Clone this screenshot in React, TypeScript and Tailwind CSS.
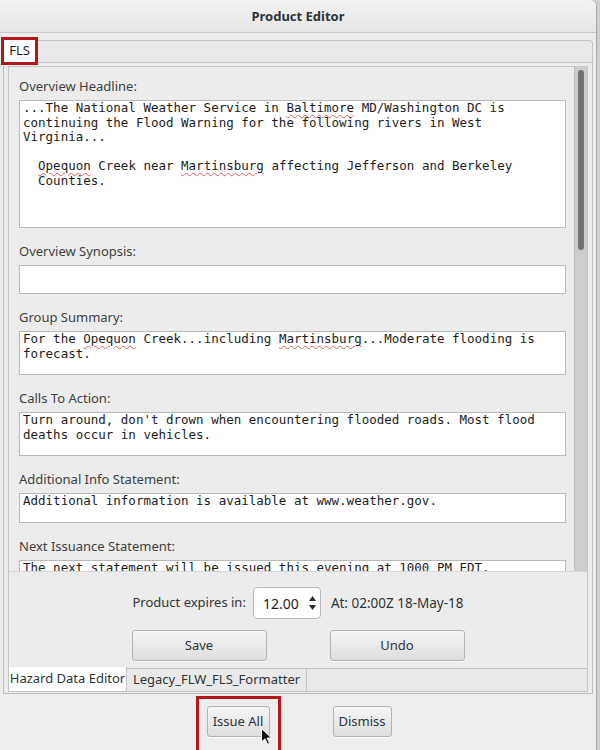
import React from "react";

const sans = { fontFamily: '"Noto Sans", "Open Sans", sans-serif' };
const mono = { fontFamily: '"DejaVu Sans Mono", "Liberation Mono", monospace' };

function Spell({ children }: { children: React.ReactNode }) {
  return (
    <span className="underline decoration-wavy decoration-[#e06060] decoration-1 underline-offset-[2px]">{children}</span>
  );
}

function Field({ label, h, first, children }: { label: string; h: string; first?: boolean; children?: React.ReactNode }) {
  return (
    <div className={first ? "" : "mt-[15px]"}>
      <div className="h-[16px] text-[13px] leading-[16px] text-[#3c3f40]">{label}</div>
      <div
        style={mono}
        className={`mt-[6px] ${h} overflow-hidden whitespace-pre-wrap border border-[#b9b9b9] bg-white px-[3px] text-[12.5px] leading-[14.5px] text-[#1c1c1c]`}
      >
        {children}
      </div>
    </div>
  );
}

function Btn({ children, w }: { children: React.ReactNode; w: string }) {
  return (
    <div
      className={`flex h-[31px] ${w} shrink-0 items-center justify-center rounded-[3px] border border-[#b3b3b3] bg-gradient-to-b from-[#f6f6f6] to-[#dedede] text-[13px] text-[#2e3436] shadow-[0_1px_0_rgba(255,255,255,0.8)]`}
    >
      {children}
    </div>
  );
}

export default function App() {
  return (
    <div style={sans} className="h-[750px] w-[600px] overflow-hidden bg-[#cfcfcf]">
      <div className="flex h-[750px] w-[597px] flex-col rounded-tr-[6px] border-r border-[#a8a8a8] bg-[#ededed]">
        {/* title bar */}
        <div className="flex h-[33px] shrink-0 items-center justify-center rounded-tr-[6px] border-b border-[#c9c9c9] bg-gradient-to-b from-[#f2f2f2] to-[#e6e6e6] pt-[1px] text-[13px] font-bold text-[#2e3436]">
          Product Editor
        </div>

        {/* outer tab strip */}
        <div className="mt-[4px] flex h-[26px] shrink-0 pl-[1px] pr-[3px]">
          <div className="relative z-10 flex h-[28px] w-[37px] items-center justify-center border-[3px] border-[#b3161c] bg-white text-[13px] text-[#1e1e1e]">
            FLS
          </div>
          <div className="mt-[3px] h-[23px] flex-1 rounded-tr-[4px] border-t border-r border-b border-[#c3c3c3] bg-[#e9e9e9]" />
        </div>

        {/* outer page */}
        <div className="ml-[3px] w-[590px] shrink-0 border-x border-b border-[#bcbcbc] bg-[#ededed] px-[4px] pt-[3px] pb-[1px]">
          <div className="border-x border-t border-[#c6c6c6] bg-[#ececec]">
            {/* scroll area */}
            <div className="flex h-[504px]">
              <div className="flex-1 overflow-hidden pl-[10px] pr-[8px] pt-[11px]">
                <Field label="Overview Headline:" h="h-[128px]" first>
                  {"...The National Weather Service in "}
                  <Spell>Baltimore</Spell>
                  {" MD/Washington DC is\ncontinuing the Flood Warning for the following rivers in West\nVirginia...\n\n  "}
                  <Spell>Opequon</Spell>
                  {" Creek near "}
                  <Spell>Martinsburg</Spell>
                  {" affecting Jefferson and Berkeley\n  Counties."}
                </Field>
                <Field label="Overview Synopsis:" h="h-[29px]" />
                <Field label="Group Summary:" h="h-[44px]">
                  {"For the "}
                  <Spell>Opequon</Spell>
                  {" Creek...including "}
                  <Spell>Martinsburg</Spell>
                  {"...Moderate flooding is\nforecast."}
                </Field>
                <Field label="Calls To Action:" h="h-[44px]">
                  {"Turn around, don't drown when encountering flooded roads. Most flood\ndeaths occur in vehicles."}
                </Field>
                <Field label="Additional Info Statement:" h="h-[30px]">
                  {"Additional information is available at www.weather.gov."}
                </Field>
                <Field label="Next Issuance Statement:" h="h-[40px]">
                  {"The next statement will be issued this evening at 1000 PM EDT."}
                </Field>
              </div>
              {/* scrollbar */}
              <div className="w-[13px] border-l border-[#bdbdbd] bg-[#cdcdcd] px-[3px] pt-[3px]">
                <div className="h-[180px] rounded-full bg-[#727272]" />
              </div>
            </div>

            {/* controls */}
            <div className="flex h-[97px] flex-col items-center border-t border-[#d6d6d6] pt-[15px]">
              <div className="flex items-center text-[13px] text-[#2e3436]">
                <span className="mr-[7px]">Product expires in:</span>
                <div className="flex h-[32px] w-[68px] items-center rounded-[4px] border border-[#b9b9b9] bg-white pl-[9px] pr-[4px]">
                  <span className="flex-1 text-[14px] text-[#1e1e1e]">12.00</span>
                  <div className="flex flex-col items-center gap-[4px] text-[#2a2a2a]">
                    <svg width="7" height="5" viewBox="0 0 7 5">
                      <path d="M3.5 0L7 5H0z" fill="currentColor" />
                    </svg>
                    <svg width="7" height="5" viewBox="0 0 7 5">
                      <path d="M0 0h7L3.5 5z" fill="currentColor" />
                    </svg>
                  </div>
                </div>
                <span className="ml-[10px] text-[13.5px]">At: 02:00Z 18-May-18</span>
              </div>
              <div className="mt-[11px] flex gap-[63px]">
                <Btn w="w-[135px]">Save</Btn>
                <Btn w="w-[135px]">Undo</Btn>
              </div>
            </div>

            {/* bottom tab strip */}
            <div className="flex h-[24px] text-[13px] text-[#2e3436]">
              <div className="-mt-px flex w-[118px] items-center justify-center border-r border-b border-[#c3c3c3] bg-white">
                Hazard Data Editor
              </div>
              <div className="flex w-[180px] items-center justify-center border-y border-r border-[#c3c3c3] bg-[#e9e9e9]">
                Legacy_FLW_FLS_Formatter
              </div>
              <div className="flex-1 border-y border-[#c3c3c3] bg-[#e9e9e9]" />
            </div>
          </div>
        </div>

        {/* dialog buttons */}
        <div className="relative flex min-h-0 flex-1 justify-center gap-[63px] overflow-hidden pt-[2px] pl-[2px]">
          <div className="h-[60px] shrink-0 -mx-[11px] border-[3px] border-[#b3161c] px-[8px] pt-[7px]">
            <Btn w="w-[63px]">Issue All</Btn>
          </div>
          <div className="pt-[10px]">
            <Btn w="w-[59px]">Dismiss</Btn>
          </div>
          <svg className="absolute left-[261px] top-[34px]" width="11" height="17" viewBox="0 0 11 17">
            <path d="M0.5 0.5V14L4 10.8L6.5 16.3L8.6 15.4L6.1 10H10.5z" fill="#111" stroke="#fff" strokeWidth="1" />
          </svg>
        </div>
      </div>
    </div>
  );
}
